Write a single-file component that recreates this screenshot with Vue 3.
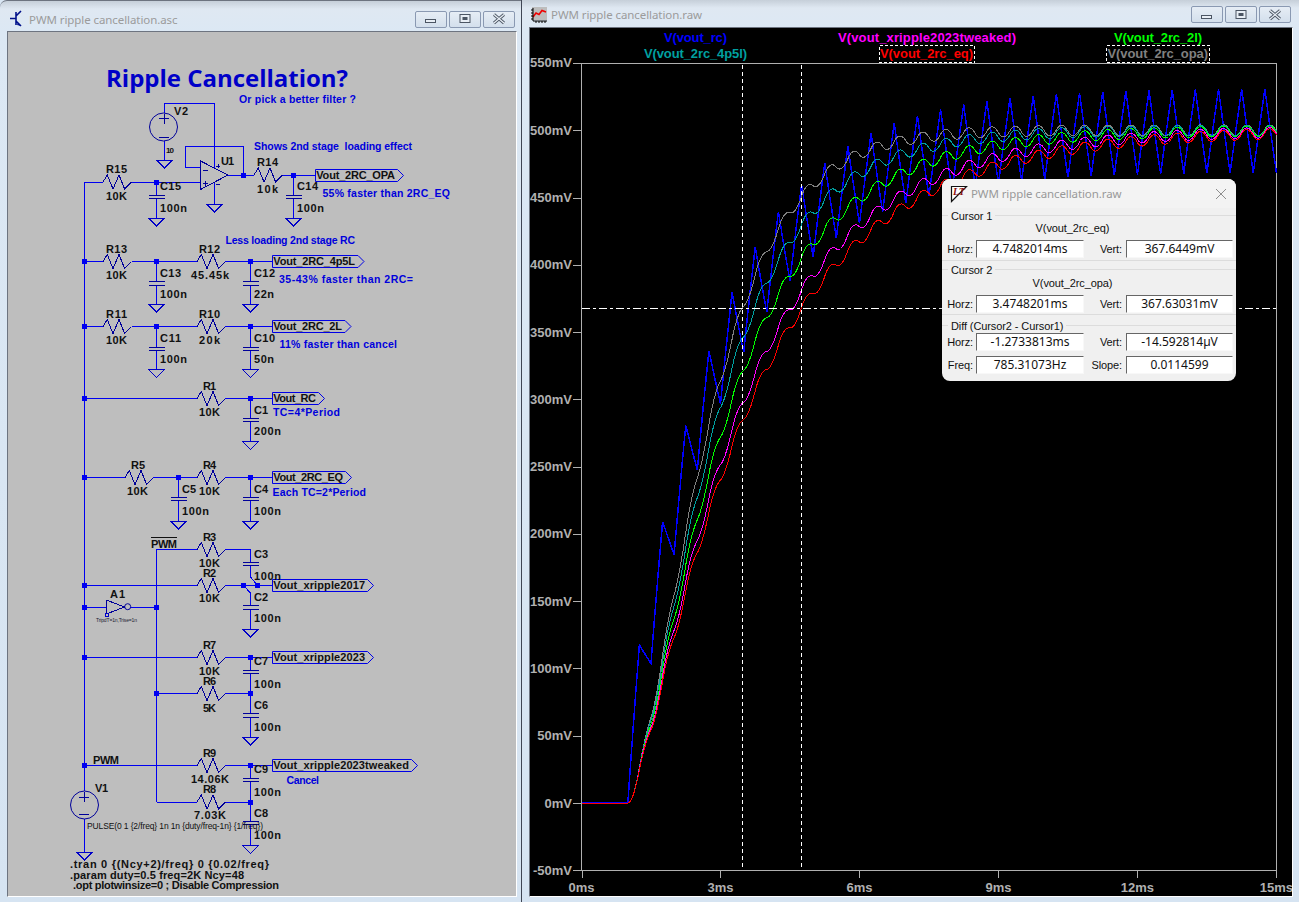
<template>
  <div class="desktop">
    <section class="win win-left">
      <header class="bar">
        <svg class="icon" viewBox="0 0 14 18" width="14" height="18">
          <path d="M0 8.5H6M6 2V15M6 6L11 1M6 11L11 16" fill="none" stroke="#00108a" stroke-width="1.6" />
          <path d="M8 12.5l3 3.5-4-1z" fill="#00108a" />
        </svg>
        <span class="title">PWM ripple cancellation.asc</span>
        <span class="spacer"></span>
        <div class="btns">
          <button v-for="b in buttons" :key="b" class="wbtn">
            <svg viewBox="0 0 16 12" width="16" height="12">
              <rect v-if="b === 'min'" x="2.5" y="6.5" width="10" height="3" fill="#e8eef5" stroke="#4b5563" />
              <g v-else-if="b === 'max'"><rect x="3" y="1.5" width="10" height="8" fill="#e8eef5" stroke="#4b5563" /><rect x="5.5" y="4" width="5" height="3" fill="#4b5563" /></g>
              <path v-else d="M3 1.5L13 10M13 1.5L3 10" stroke="#4b5563" stroke-width="3" /><path v-if="b === 'close'" d="M3 1.5L13 10M13 1.5L3 10" stroke="#e8eef5" stroke-width="1.3" />
            </svg>
          </button>
        </div>
      </header>
      <div class="client">
        <svg class="schem" viewBox="8 32 508 864">
          <text x="106" y="87" class="head" textLength="242">Ripple Cancellation?</text>
          <g shape-rendering="crispEdges" fill="none">
            <polyline v-for="(w, i) in wires" :key="'w' + i" :points="w" stroke="#0000f0" />
            <path v-for="(r, i) in resistorPaths" :key="'r' + i" :d="r" stroke="#00009a" />
            <path v-for="(c, i) in capPaths" :key="'c' + i" :d="c" stroke="#00009a" />
            <path v-for="(g, i) in groundPaths" :key="'g' + i" :d="g" stroke="#0000c8" />
            <path v-for="(s, i) in symbolPaths" :key="'s' + i" :d="s" stroke="#00009a" />
            <rect v-for="(j, i) in junctions" :key="'j' + i" :x="j[0] - 2.5" :y="j[1] - 2.5" width="5" height="5" fill="#0000f0" />
            <path d="M151 537H177" stroke="#111" />
            <rect x="105" y="613" width="3" height="3" stroke="#0000c8" />
          </g>
          <g fill="none" stroke="#00009a">
            <circle cx="163.5" cy="127" r="14" />
            <circle cx="84.5" cy="805" r="14" />
            <circle cx="127.7" cy="606.7" r="3" />
          </g>
          <polygon v-for="(f, i) in flags" :key="'f' + i" :points="flagPoints(f)" fill="none" stroke="#0000e6" />
          <text v-for="(f, i) in flags" :key="'ft' + i" :x="f[0] + 0.8" :y="f[2] + 3.2" :textLength="f[4] - f[0] - 0.8" class="lbl">{{ f[3] }}</text>
          <text v-for="(t, i) in labels" :key="'l' + i" :x="t[1]" :y="t[3] + 4" :textLength="t[2] - t[1]" class="lbl">{{ t[0] }}</text>
          <text v-for="(t, i) in comments" :key="'m' + i" :x="t[1]" :y="t[3] + 3.8" :textLength="t[2] - t[1]" class="cmt">{{ t[0] }}</text>
          <text x="166" y="152.5" textLength="8" class="tiny">10</text>
          <text x="96" y="622" textLength="41" class="micro">TripdT=1n,Trise=1n</text>
          <text x="87" y="829" textLength="176" class="pulse">PULSE(0 1 {2/freq} 1n 1n {duty/freq-1n} {1/freq})</text>
        </svg>
      </div>
    </section>

    <div class="sep"></div>

    <section class="win win-right">
      <header class="bar">
        <svg class="icon2" viewBox="0 0 17 16" width="17" height="16">
          <rect x="1" y="0" width="15" height="13" fill="#bdbdbd" />
          <path d="M2 10L5 6L8 7.5L11 3.5L15 5" fill="none" stroke="#f00000" stroke-width="1.6" />
          <path d="M2 1V14H16M0 3H2M0 6H2M0 9H2M0 12H2M5 14V16M8 14V16M11 14V16M14 14V16" fill="none" stroke="#000" />
        </svg>
        <span class="title">PWM ripple cancellation.raw</span>
        <span class="spacer"></span>
        <div class="btns">
          <button v-for="b in buttons" :key="b" class="wbtn">
            <svg viewBox="0 0 16 12" width="16" height="12">
              <rect v-if="b === 'min'" x="2.5" y="6.5" width="10" height="3" fill="#e8eef5" stroke="#4b5563" />
              <g v-else-if="b === 'max'"><rect x="3" y="1.5" width="10" height="8" fill="#e8eef5" stroke="#4b5563" /><rect x="5.5" y="4" width="5" height="3" fill="#4b5563" /></g>
              <path v-else d="M3 1.5L13 10M13 1.5L3 10" stroke="#4b5563" stroke-width="3" /><path v-if="b === 'close'" d="M3 1.5L13 10M13 1.5L3 10" stroke="#e8eef5" stroke-width="1.3" />
            </svg>
          </button>
        </div>
      </header>
      <div class="client plot-client">
        <svg class="plot" viewBox="530 28 762 868">
          <text v-for="l in legends" :key="l[0]" :x="l[1]" :y="l[3] + 4.5" :textLength="l[2] - l[1]" :fill="l[4]" class="legend">{{ l[0] }}</text>
          <g fill="none" stroke="#fff" stroke-dasharray="3 2" shape-rendering="crispEdges">
            <rect x="879.5" y="45.5" width="95" height="17" />
            <rect x="1106.5" y="45.5" width="103" height="17" />
          </g>
          <g shape-rendering="crispEdges" fill="none">
            <path :d="frame" stroke="#b0b0b0" />
            <path v-for="t in traces" :key="t.color" :d="t.d" :stroke="t.color" :stroke-width="t.width" />
            <path d="M742.5 65V868M801.5 65V868" stroke="#fff" stroke-dasharray="4 3" />
            <path d="M582 308.5H1276" stroke="#fff" stroke-dasharray="8 3 3 3" />
          </g>
          <text v-for="a in yAxis" :key="a.text" x="572" :y="a.y + 4.5" text-anchor="end" class="axis">{{ a.text }}</text>
          <text v-for="a in xAxis" :key="a.text" :x="a.x" y="891.5" text-anchor="middle" class="axis">{{ a.text }}</text>
        </svg>

        <div class="dialog">
          <div class="dlg-head">
            <svg viewBox="0 0 18 18" width="18" height="18">
              <path d="M1.5 1.5H16.5L1.5 16.5Z" fill="#fff" stroke="#111" stroke-width="1.2" />
              <text x="3" y="10" class="logo">LT</text>
            </svg>
            <span class="dlg-title">PWM ripple cancellation.raw</span>
            <span class="spacer"></span>
            <svg viewBox="0 0 12 12" width="12" height="12"><path d="M1 1L11 11M11 1L1 11" stroke="#8d8d8d" fill="none" /></svg>
          </div>
          <div class="dlg-body">
            <div v-for="(g, gi) in groups" :key="g.name" class="group" :class="'g' + (gi + 1)">
              <span class="group-name">{{ g.name }}</span>
              <div v-if="g.trace" class="trace">{{ g.trace }}</div>
              <div v-for="(r, ri) in g.rows" :key="ri" class="row">
                <label class="k1">{{ r[0] }}</label>
                <span class="val v1">{{ r[1] }}</span>
                <label class="k2">{{ r[2] }}</label>
                <span class="val v2">{{ r[3] }}</span>
              </div>
            </div>
          </div>
        </div>
      </div>
    </section>
  </div>
</template>

<script setup>
const buttons = ['min', 'max', 'close']

const wires = [
  '84,182 84,791', '84,182 103,182', '132,182 200,182', '156.5,182 156.5,195', '156.5,198.5 156.5,218',
  '228,175 254,175', '243.5,175 243.5,146.5 185.5,146.5 185.5,167 200.5,167',
  '214.5,168 214.5,103.5 164.5,103.5 164.5,113', '164.5,141 164.5,160', '214.5,182 214.5,204',
  '282,175 315.5,175', '293.5,175 293.5,195', '293.5,198.5 293.5,218',
  '84,261.5 103,261.5', '132,261.5 197,261.5', '225,261.5 272.5,261.5', '156.5,261.5 156.5,281.5', '156.5,285 156.5,304',
  '250.5,261.5 250.5,281.5', '250.5,285 250.5,304',
  '84,326.5 103,326.5', '132,326.5 197,326.5', '225,326.5 272.5,326.5', '156.5,326.5 156.5,347', '156.5,350.5 156.5,369.5',
  '250.5,326.5 250.5,347', '250.5,350.5 250.5,369.5',
  '84,398.5 197,398.5', '225,398.5 272.5,398.5', '250.5,398.5 250.5,418', '250.5,421.5 250.5,441.5',
  '84,477.5 125,477.5', '153,477.5 197,477.5', '225,477.5 272.5,477.5', '178.5,477.5 178.5,497', '178.5,500.5 178.5,521',
  '250.5,477.5 250.5,497', '250.5,500.5 250.5,521',
  '156.5,802 156.5,549.5 197,549.5', '225,549.5 250.5,549.5 250.5,562', '250.5,565.5 250.5,577 257.5,585.5',
  '84,585.5 197,585.5', '225,585.5 272.5,585.5', '243.5,585.5 250.5,593 250.5,605', '250.5,609 250.5,629',
  '84,607 106,607', '131,607 156.5,607',
  '84,657.5 197,657.5', '225,657.5 272.5,657.5', '250.5,657.5 250.5,670', '250.5,674 250.5,713.5',
  '156.5,693.5 197,693.5', '225,693.5 250.5,693.5', '250.5,717 250.5,737',
  '84,765.5 197,765.5', '225,765.5 272.5,765.5', '250.5,765.5 250.5,778', '250.5,782 250.5,821',
  '156.5,802 197,802', '225,802 250.5,802', '250.5,825 250.5,845.5', '84,819 84,852',
]

const resistors = [
  [103, 182], [254, 175], [103, 261.5], [197, 261.5], [103, 326.5], [197, 326.5], [197, 398.5], [125, 477.5], [197, 477.5],
  [197, 549.5], [197, 585.5], [197, 657.5], [197, 693.5], [197, 765.5], [197, 802],
]
const resistorPaths = resistors.map(([x, y]) =>
  `M${x} ${y}L${x + 4.3} ${y - 7}L${x + 10} ${y + 7}L${x + 16} ${y - 7}L${x + 21.6} ${y + 7}L${x + 28.3} ${y}`)

const caps = [
  [156.5, 195], [293.5, 195], [156.5, 281.5], [250.5, 281.5], [156.5, 347], [250.5, 347], [250.5, 418], [178.5, 497], [250.5, 497],
  [250.5, 562], [250.5, 605.5], [250.5, 670], [250.5, 713.5], [250.5, 778], [250.5, 821],
]
const capPaths = caps.map(([x, y]) => `M${x - 8} ${y}H${x + 8}M${x - 8} ${y + 3.5}H${x + 8}`)

const grounds = [
  [156.5, 218], [293.5, 218], [164.5, 160], [214.5, 204], [156.5, 304], [250.5, 304], [156.5, 369.5], [250.5, 369.5], [250.5, 441.5],
  [178.5, 521], [250.5, 521], [250.5, 629], [250.5, 737], [250.5, 845.5], [84.5, 852],
]
const groundPaths = grounds.map(([x, y]) => `M${x - 8} ${y}H${x + 8}L${x} ${y + 8}Z`)

const symbolPaths = [
  'M200.5 161V189.5L228 175Z',
  'M216 166H220M218 164V168M216 184.5H220M203 183H208M205.5 180.5V185.5M203 170H208',
  'M159 118.5H169M164 113.5V123.5M159 137H169',
  'M79 797H89M84 792V802M79 814H89',
  'M106.3 600V614L124.5 607Z',
]

const junctions = [
  [156.5, 182], [243.5, 175], [293.5, 175], [84.5, 261.5], [156.5, 261.5], [250.5, 261.5], [84.5, 326.5], [156.5, 326.5], [250.5, 326.5],
  [84.5, 398.5], [250.5, 398.5], [84.5, 477.5], [178.5, 477.5], [250.5, 477.5], [84.5, 585.5], [243.5, 585.5], [257.5, 585.5],
  [84.5, 607], [156.5, 607], [84.5, 657.5], [250.5, 657.5], [156.5, 693.5], [250.5, 693.5], [84.5, 765.5], [250.5, 765.5], [250.5, 802],
]

const flags = [
  [315.5, 403.5, 175.5, 'Vout_2RC_OPA', 395],
  [272.5, 364, 261.5, 'Vout_2RC_4p5L', 355],
  [272.5, 351, 326.5, 'Vout_2RC_2L', 342],
  [272.5, 324.5, 398.5, 'Vout_RC', 316],
  [272.5, 351.5, 477.5, 'Vout_2RC_EQ', 343],
  [272.5, 373.5, 585.5, 'Vout_xripple2017', 365],
  [272.5, 373.5, 657.5, 'Vout_xripple2023', 365],
  [272.5, 417.5, 765.5, 'Vout_xripple2023tweaked', 409],
]
const flagPoints = ([a, b, y]) => `${a},${y - 6} ${b - 6},${y - 6} ${b},${y} ${b - 6},${y + 6} ${a},${y + 6}`

const labels = [
  ['V2', 174, 188, 111], ['U1', 221, 234, 161], ['R15', 106, 127, 169], ['10K', 106, 127, 195.5], ['C15', 160, 181, 186], ['100n', 160, 187, 208],
  ['R14', 257, 278, 162], ['10k', 257, 278, 188.5], ['C14', 297, 318, 186], ['100n', 297, 324, 208],
  ['R13', 106, 127, 248.5], ['10K', 106, 127, 274.5], ['C13', 160, 181, 272.5], ['100n', 160, 187, 294],
  ['R12', 199, 220, 248.5], ['45.45k', 191, 229, 274.5], ['C12', 254, 275, 272.5], ['22n', 254, 274, 294],
  ['R11', 106, 127, 313.5], ['10K', 106, 127, 339.5], ['C11', 160, 181, 337.5], ['100n', 160, 187, 358.5],
  ['R10', 199, 220, 313.5], ['20k', 199, 220, 339.5], ['C10', 254, 275, 337.5], ['50n', 254, 274, 358.5],
  ['R1', 203, 216, 385.5], ['10K', 199, 220, 411.5], ['C1', 254, 268, 409.5], ['200n', 254, 281, 430.5],
  ['R5', 131, 145, 464.5], ['10K', 127, 148, 490.5], ['C5', 182, 196, 488.5], ['100n', 182, 209, 510.5],
  ['R4', 203, 216, 464.5], ['10K', 199, 220, 490.5], ['C4', 254, 268, 488.5], ['100n', 254, 281, 510.5],
  ['PWM', 151, 177, 543.5], ['R3', 203, 216, 536.5], ['10K', 199, 220, 563], ['C3', 254, 268, 553.5], ['100n', 254, 281, 575.5],
  ['R2', 203, 216, 572.5], ['10K', 199, 220, 598], ['C2', 254, 268, 597], ['100n', 254, 281, 618], ['A1', 110, 125, 593.5],
  ['R7', 203, 216, 644.5], ['10K', 199, 220, 671], ['C7', 254, 268, 661], ['100n', 254, 281, 683.5],
  ['R6', 203, 216, 681], ['5K', 203, 216, 707.5], ['C6', 254, 268, 704.5], ['100n', 254, 281, 726.5],
  ['PWM', 93, 119, 759.5], ['R9', 203, 216, 752.5], ['14.06K', 191, 229, 779], ['C9', 254, 268, 769], ['100n', 254, 281, 791.5],
  ['R8', 203, 216, 789], ['7.03K', 194, 226, 815], ['C8', 254, 268, 812.5], ['100n', 254, 281, 834.5], ['V1', 95, 108, 787.5],
  ['.tran 0 {(Ncy+2)/freq} 0 {0.02/freq}', 70, 269, 863.5],
  ['.param duty=0.5 freq=2K Ncy=48', 70, 244, 874.5],
  ['.opt plotwinsize=0 ; Disable Compression', 73, 279, 884.5],
]

const comments = [
  ['Or pick a better filter ?', 239, 356, 99.5],
  ['Shows 2nd stage  loading effect', 254, 412, 146.5],
  ['55% faster than 2RC_EQ', 322.5, 450, 193.5],
  ['Less loading 2nd stage RC', 225.5, 355, 240.5],
  ['35-43% faster than 2RC=', 279, 413, 279.5],
  ['11% faster than cancel', 279.5, 397, 344.5],
  ['TC=4*Period', 273, 340, 412.5],
  ['Each TC=2*Period', 272.5, 366, 492.5],
  ['Cancel', 286.5, 319, 780.5],
]

const legends = [
  ['V(vout_rc)', 664, 727, 37.5, '#0000ff'],
  ['V(vout_2rc_4p5l)', 644, 747, 53.5, '#00a0a0'],
  ['V(vout_xripple2023tweaked)', 838, 1016, 37.5, '#ff00ff'],
  ['V(vout_2rc_eq)', 880, 973, 53.5, '#ff0000'],
  ['V(vout_2rc_2l)', 1114, 1202, 37.5, '#00ff00'],
  ['V(vout_2rc_opa)', 1107.5, 1208, 53.5, '#808080'],
]

const X0 = 581.5
const PX_MS = 46.33
const Y0 = 803
const PX_MV = 1.3455
const yPos = (mv) => Y0 - mv * PX_MV

const yAxis = []
for (let mv = 550; mv >= -50; mv -= 50) yAxis.push({ text: mv + 'mV', y: yPos(mv) })
const xAxis = [0, 3, 6, 9, 12, 15].map((ms) => ({ text: ms + 'ms', x: X0 + ms * PX_MS }))

let frame = 'M581.5 63V870.5M1276.5 63V878M581.5 63H1276.5M573 870.5H1276.5'
for (const a of yAxis) frame += `M573 ${Math.round(a.y) + 0.5}H581.5`
for (const a of xAxis) frame += `M${Math.round(a.x) + 0.5} 870.5V878`

function simulate() {
  const dt = 0.5e-6
  const steps = 30000
  const s = { rc: 0, e1: 0, e2: 0, o1: 0, o2: 0, a1: 0, a2: 0, b1: 0, b2: 0, vc: -1, n: 1 }
  const out = { rc: [], o: [], a: [], b: [], m: [], e: [] }
  const twoStage = (v1, v2, p, r1, c1, r2, c2) => {
    const i2 = (v1 - v2) / r2
    return [v1 + ((dt * ((p - v1) / r1 - i2)) / c1), v2 + (dt * i2) / c2]
  }
  for (let k = 0; k <= steps; k++) {
    const t = k * dt
    const on = t >= 1e-3 && (t - 1e-3) % 0.5e-3 < 0.25e-3
    const p = on ? 1 : 0
    const pb = on ? 0 : 1
    if (k % 20 === 0) {
      const x = (X0 + t * 1000 * PX_MS).toFixed(1)
      const pt = (v) => `${x} ${yPos(v * 1000).toFixed(1)}`
      out.rc.push(pt(s.rc))
      out.o.push(pt(s.o2))
      out.a.push(pt(s.a2))
      out.b.push(pt(s.b2))
      out.m.push(pt(s.n + s.vc))
      out.e.push(pt(s.e2))
    }
    s.rc += (dt * (p - s.rc)) / (10e3 * 200e-9)
    ;[s.e1, s.e2] = twoStage(s.e1, s.e2, p, 10e3, 100e-9, 10e3, 100e-9)
    s.o1 += (dt * (p - s.o1)) / 1e-3
    s.o2 += (dt * (s.o1 - s.o2)) / 1e-3
    ;[s.a1, s.a2] = twoStage(s.a1, s.a2, p, 10e3, 100e-9, 45.45e3, 22e-9)
    ;[s.b1, s.b2] = twoStage(s.b1, s.b2, p, 10e3, 100e-9, 20e3, 50e-9)
    const i1 = (p - (s.n + s.vc)) / 14.06e3
    const i2 = (pb - s.n) / 7.03e3
    s.vc += (dt * i1) / 100e-9
    s.n += (dt * (i1 + i2)) / 100e-9
  }
  const d = (a) => 'M' + a.join('L')
  return [
    { color: '#0000ff', width: 1.5, d: d(out.rc) },
    { color: '#808080', width: 1, d: d(out.o) },
    { color: '#00a0a0', width: 1, d: d(out.a) },
    { color: '#00ff00', width: 1, d: d(out.b) },
    { color: '#ff00ff', width: 1, d: d(out.m) },
    { color: '#ff0000', width: 1, d: d(out.e) },
  ]
}
const traces = simulate()

const groups = [
  { name: 'Cursor 1', trace: 'V(vout_2rc_eq)', rows: [['Horz:', '4.7482014ms', 'Vert:', '367.6449mV']] },
  { name: 'Cursor 2', trace: 'V(vout_2rc_opa)', rows: [['Horz:', '3.4748201ms', 'Vert:', '367.63031mV']] },
  {
    name: 'Diff (Cursor2 - Cursor1)',
    trace: '',
    rows: [
      ['Horz:', '-1.2733813ms', 'Vert:', '-14.592814µV'],
      ['Freq:', '785.31073Hz', 'Slope:', '0.0114599'],
    ],
  },
]
</script>

<style>
html, body { margin: 0; padding: 0; background: #d9e6f3; }
</style>

<style scoped>
.desktop { display: flex; width: 1299px; height: 902px; overflow: hidden; background: #d9e6f3; font-family: "Liberation Sans", Arial, sans-serif; }
.win { display: flex; flex-direction: column; box-sizing: border-box; background: linear-gradient(#c6cfd9 0, #dfe8f2 8px, #dce8f4 30px, #d6e4f2 100%); }
.win-left { width: 521px; padding: 0 4px 5px 7px; border-top: 1px solid #6d7480; border-top-left-radius: 7px; }
.win-right { flex: 1; padding: 0 6px 5px 7px; }
.sep { width: 1px; background: #3f4654; }
.win-left .bar { height: 30px; padding-top: 6px; margin-left: -7px; margin-right: -4px; padding-left: 10px; padding-right: 6px; }
.win-right .bar { height: 27px; padding-top: 2px; margin-left: -7px; margin-right: -6px; padding-left: 9px; padding-right: 8px; }
.bar { display: flex; align-items: center; box-sizing: border-box; flex: none; }
.icon { margin-right: 5px; flex: none; }
.icon2 { margin-right: 3px; flex: none; }
.title { color: #9b9b9b; font: 11.5px "Noto Sans", sans-serif; letter-spacing: -0.08px; white-space: nowrap; }
.spacer { flex: 1; }
.btns { display: flex; gap: 2px; }
.wbtn { width: 32px; height: 17px; padding: 0; box-sizing: border-box; display: flex; align-items: center; justify-content: center; border: 1px solid #8a99b2; border-radius: 2px; background: linear-gradient(#e6edf5, #d3dfec); }
.client { box-sizing: border-box; flex: 1; border: 1px solid; border-color: #6d7480 #fff #fff #6d7480; min-height: 0; }
.schem { display: block; width: 508px; height: 864px; background: #bebebe; }
.plot-client { position: relative; background: #000; }
.plot { display: block; width: 762px; height: 868px; background: #000; }
.head { font: bold 24px "Open Sans", sans-serif; fill: #0000c8; }
.lbl { font: bold 11px "Liberation Sans", sans-serif; fill: #111; }
.cmt { font: bold 10.5px "Liberation Sans", sans-serif; fill: #0000dc; white-space: pre; }
.tiny { font: bold 8px "Liberation Sans", sans-serif; fill: #111; }
.micro { font: 5px "Liberation Sans", sans-serif; fill: #223; }
.pulse { font: 8.5px "Liberation Sans", sans-serif; fill: #111; }
.legend { font: bold 13px "Liberation Sans", sans-serif; }
.axis { font: bold 13px "Liberation Sans", sans-serif; fill: #b0b0b0; }
.logo { font: italic bold 10px "Liberation Serif", serif; fill: #8b1010; }
.dialog { position: absolute; left: 412px; top: 151px; width: 294px; height: 202px; box-sizing: border-box; background: #f0f0f0; border-radius: 8px; box-shadow: 0 2px 10px rgba(0, 0, 0, 0.4); color: #111; font: 11px "Liberation Sans", sans-serif; letter-spacing: -0.1px; }
.dlg-head { height: 29px; display: flex; align-items: center; box-sizing: border-box; padding: 0 9px 0 8px; background: #f3f3f3; border-radius: 8px 8px 0 0; }
.dlg-title { margin-left: 3px; font: 11.5px "Noto Sans", sans-serif; letter-spacing: -0.1px; color: #999; }
.dlg-body { padding-top: 7px; }
.group { box-sizing: border-box; height: 46px; border-top: 1px solid #dcdcdc; border-bottom: 1px solid #dcdcdc; margin-bottom: 7px; padding-left: 5px; }
.g2 { margin-top: 8px; margin-bottom: 0; }
.g3 { height: auto; border-bottom: 0; margin-top: 10px; margin-bottom: 0; }
.group-name { display: block; width: fit-content; height: 14px; line-height: 14px; margin: -7px 0 0 1px; padding: 0 3px; background: #f0f0f0; }
.trace { width: 251px; height: 14px; line-height: 14px; margin-top: -2px; text-align: center; }
.g2 .trace { margin-top: -1px; }
.row { display: flex; align-items: center; margin-top: 5px; }
.g3 .row:first-of-type { margin-top: 0; }
.k1 { width: 26px; margin-right: 3px; text-align: right; }
.k2 { width: 38px; margin-right: 4px; text-align: right; }
.val { box-sizing: border-box; height: 18px; line-height: 16px; text-align: center; background: #fff; border: 1px solid; border-color: #666 #f8f8f8 #f8f8f8 #666; font: 12px/16px "Noto Sans", sans-serif; letter-spacing: 0; color: #111; }
.v1 { width: 108px; }
.v2 { width: 107px; }
</style>
